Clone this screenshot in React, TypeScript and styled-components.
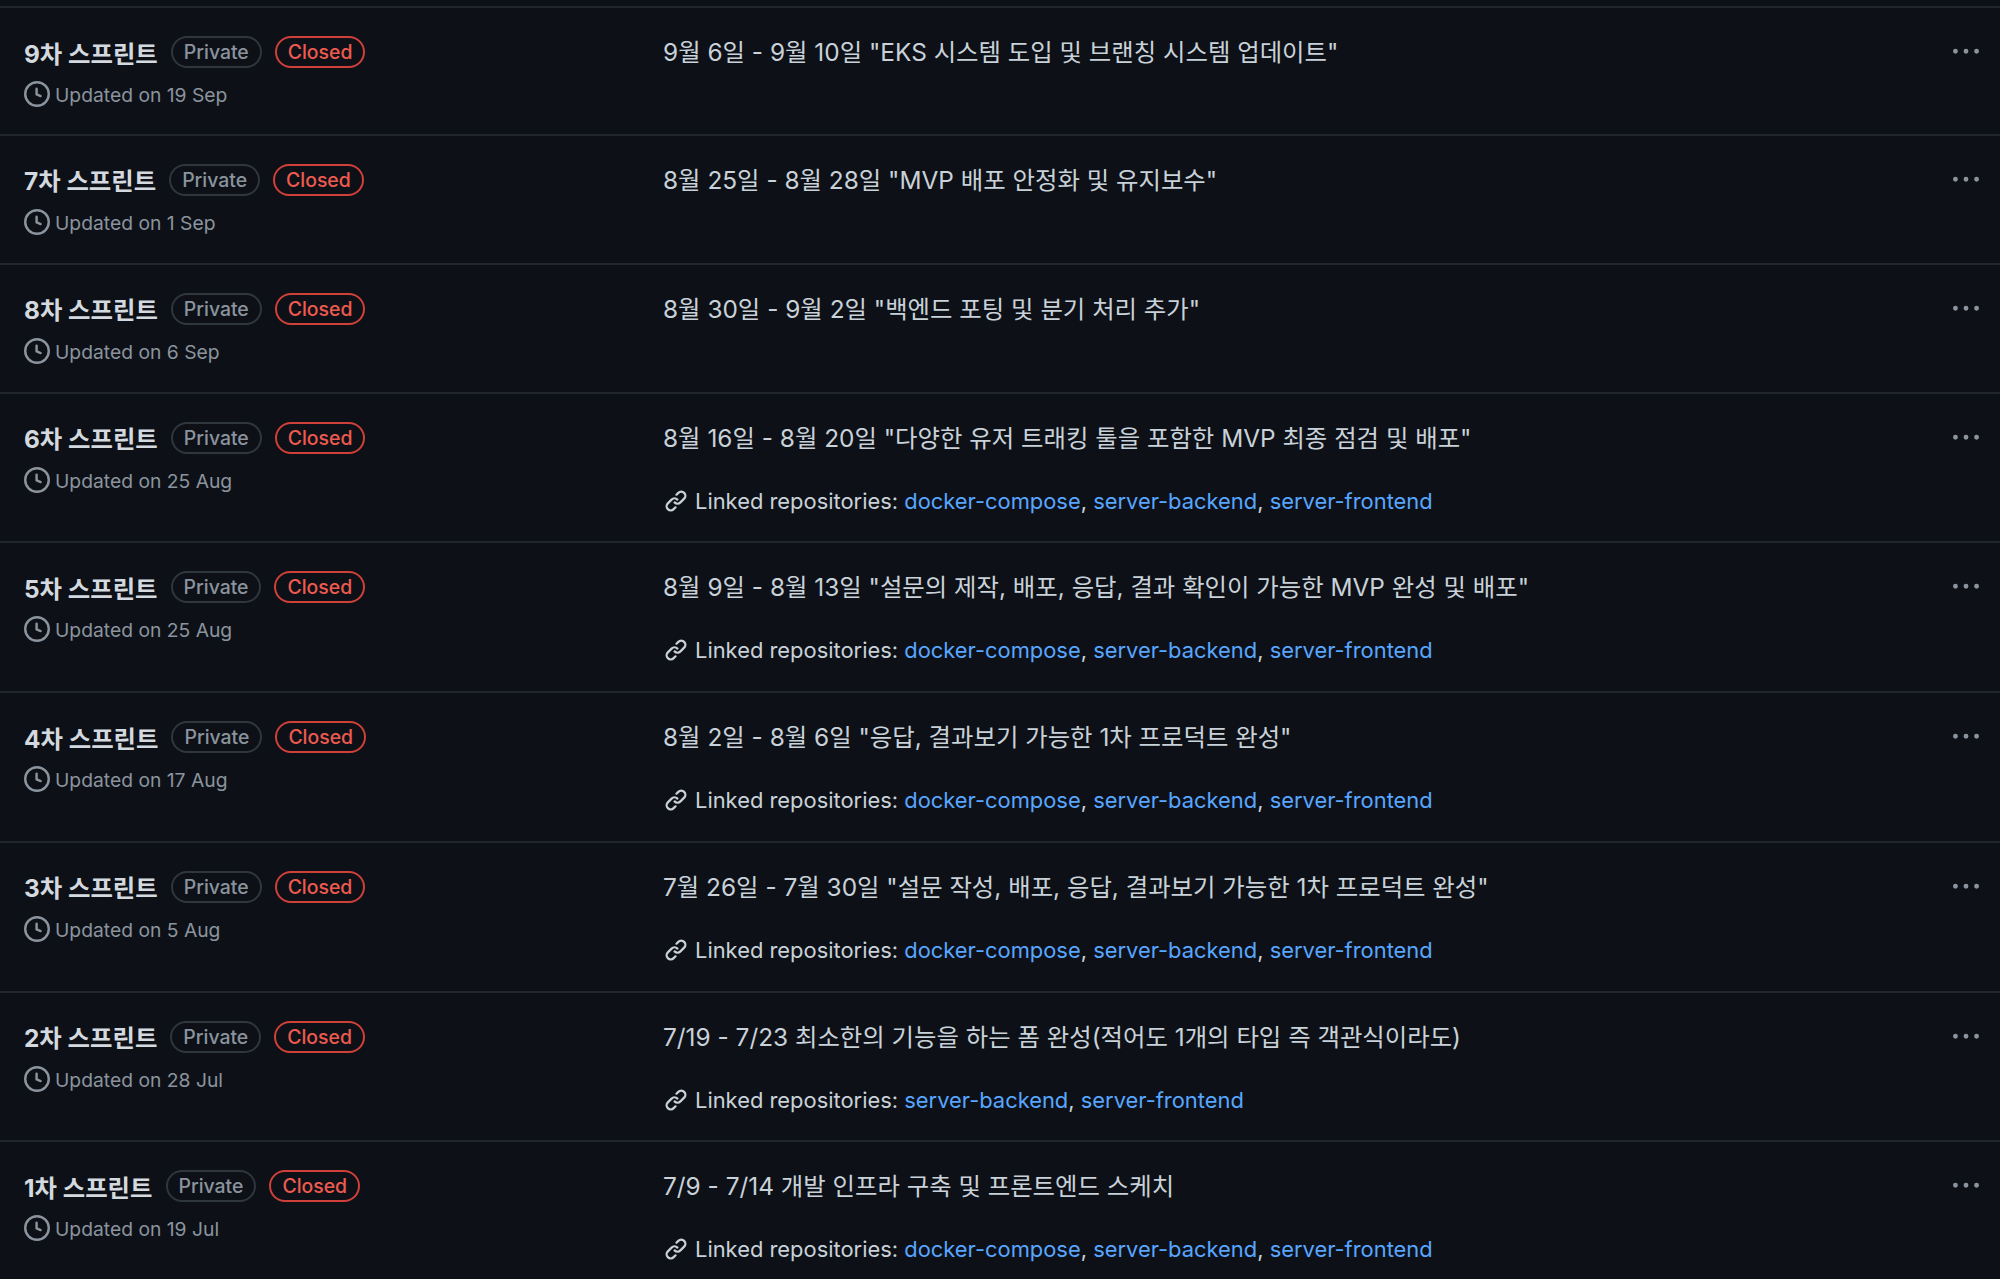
import React from 'react'
import styled, { createGlobalStyle } from 'styled-components'

const GlobalStyle = createGlobalStyle`
  html, body {
    margin: 0;
    padding: 0;
    height: 100%;
    background: #0d1117;
    overflow: hidden;
  }
  body {
    font-family: Inter, 'Noto Sans CJK KR', sans-serif;
    color: #c9d1d9;
  }
`

const Page = styled('div')`
  padding-top: 6px;
  height: 1279px;
  box-sizing: border-box;
  overflow: hidden;
`

const Row = styled('div')<{ $linked: boolean }>`
  display: grid;
  grid-template-columns: 639px 1fr 47px;
  height: ${({ $linked }) => ($linked ? 149.8 : 129)}px;
  box-sizing: border-box;
  padding-left: 24px;
  border-top: 2px solid #21262d;

  &:first-child {
    height: 127.5px;
  }
`

const Left = styled('div')`
  display: flex;
  flex-direction: column;
  padding-top: 28px;
`

const TitleRow = styled('div')`
  display: flex;
  align-items: center;
  height: 32px;
`

const Title = styled('span')`
  font-size: 24.4px;
  font-weight: 700;
  color: #d3d9df;
  margin-right: 13px;
`

const Pill = styled('span')<{ $closed?: boolean }>`
  display: inline-flex;
  align-items: center;
  height: 32px;
  box-sizing: border-box;
  padding: 0 11px;
  margin-right: 13px;
  border-radius: 16px;
  font-size: 19.4px;
  font-weight: 500;
  border: 2px solid ${({ $closed }) => ($closed ? '#cf4038' : '#30363d')};
  color: ${({ $closed }) => ($closed ? '#ee5a4f' : '#8b949e')};
`

const Updated = styled('div')`
  display: flex;
  align-items: center;
  gap: 5px;
  margin-top: 12px;
  height: 28px;
  font-size: 19.3px;
  color: #8b949e;
`

const UpdatedText = styled('span')`
  padding-top: 2px;
`

const Middle = styled('div')`
  display: flex;
  flex-direction: column;
  padding-top: 28px;
`

const Description = styled('div')`
  height: 32px;
  line-height: 32px;
  font-size: 24.4px;
  color: #c9d1d9;
  white-space: nowrap;
`

const Repos = styled('div')`
  display: flex;
  align-items: center;
  gap: 7px;
  margin-top: 31px;
  padding-left: 1px;
  height: 32px;
  font-size: 21.9px;
  color: #c9d1d9;
  white-space: nowrap;
`

const RepoLink = styled('span')`
  color: #58a6ff;
`

const More = styled('div')`
  display: flex;
  justify-content: flex-start;
  align-items: flex-start;
  padding-top: 31px;
  color: #8b949e;
`

const ClockIcon = () => (
  <svg width={26} height={26} viewBox="0 0 16 16" fill="currentColor">
    <path d="M8 0a8 8 0 1 1 0 16A8 8 0 0 1 8 0ZM1.5 8a6.5 6.5 0 1 0 13 0 6.5 6.5 0 0 0-13 0Zm7-3.25v2.992l2.028.812a.75.75 0 0 1-.557 1.392l-2.5-1A.751.751 0 0 1 7 8.25v-3.5a.75.75 0 0 1 1.5 0Z" />
  </svg>
)

const LinkIcon = () => (
  <svg width={24} height={24} viewBox="0 0 16 16" fill="currentColor">
    <path d="m7.775 3.275 1.25-1.25a3.5 3.5 0 1 1 4.95 4.95l-2.5 2.5a3.5 3.5 0 0 1-4.95 0 .751.751 0 0 1 .018-1.042.751.751 0 0 1 1.042-.018 1.998 1.998 0 0 0 2.83 0l2.5-2.5a2.002 2.002 0 0 0-2.83-2.83l-1.25 1.25a.751.751 0 0 1-1.042-.018.751.751 0 0 1-.018-1.042Zm-4.69 9.64a1.998 1.998 0 0 0 2.83 0l1.25-1.25a.751.751 0 0 1 1.042.018.751.751 0 0 1 .018 1.042l-1.25 1.25a3.5 3.5 0 1 1-4.95-4.95l2.5-2.5a3.5 3.5 0 0 1 4.95 0 .751.751 0 0 1-.018 1.042.751.751 0 0 1-1.042.018 1.998 1.998 0 0 0-2.83 0l-2.5 2.5a1.998 1.998 0 0 0 0 2.83Z" />
  </svg>
)

const DotsIcon = () => (
  <svg width={26} height={26} viewBox="0 0 16 16" fill="currentColor">
    <path d="M8 9a1.5 1.5 0 1 0 0-3 1.5 1.5 0 0 0 0 3ZM1.5 9a1.5 1.5 0 1 0 0-3 1.5 1.5 0 0 0 0 3Zm13 0a1.5 1.5 0 1 0 0-3 1.5 1.5 0 0 0 0 3Z" />
  </svg>
)

interface Sprint {
  title: string
  updated: string
  description: string
  repos: string[]
}

const allRepos = ['docker-compose', 'server-backend', 'server-frontend']

const sprints: Sprint[] = [
  { title: '9차 스프린트', updated: '19 Sep', description: '9월 6일 - 9월 10일 "EKS 시스템 도입 및 브랜칭 시스템 업데이트"', repos: [] },
  { title: '7차 스프린트', updated: '1 Sep', description: '8월 25일 - 8월 28일 "MVP 배포 안정화 및 유지보수"', repos: [] },
  { title: '8차 스프린트', updated: '6 Sep', description: '8월 30일 - 9월 2일 "백엔드 포팅 및 분기 처리 추가"', repos: [] },
  { title: '6차 스프린트', updated: '25 Aug', description: '8월 16일 - 8월 20일 "다양한 유저 트래킹 툴을 포함한 MVP 최종 점검 및 배포"', repos: allRepos },
  { title: '5차 스프린트', updated: '25 Aug', description: '8월 9일 - 8월 13일 "설문의 제작, 배포, 응답, 결과 확인이 가능한 MVP 완성 및 배포"', repos: allRepos },
  { title: '4차 스프린트', updated: '17 Aug', description: '8월 2일 - 8월 6일 "응답, 결과보기 가능한 1차 프로덕트 완성"', repos: allRepos },
  { title: '3차 스프린트', updated: '5 Aug', description: '7월 26일 - 7월 30일 "설문 작성, 배포, 응답, 결과보기 가능한 1차 프로덕트 완성"', repos: allRepos },
  { title: '2차 스프린트', updated: '28 Jul', description: '7/19 - 7/23 최소한의 기능을 하는 폼 완성(적어도 1개의 타입 즉 객관식이라도)', repos: ['server-backend', 'server-frontend'] },
  { title: '1차 스프린트', updated: '19 Jul', description: '7/9 - 7/14 개발 인프라 구축 및 프론트엔드 스케치', repos: allRepos },
]

export default function App() {
  return (
    <Page>
      <GlobalStyle />
      {sprints.map(sprint => (
        <Row key={sprint.title} $linked={sprint.repos.length > 0}>
          <Left>
            <TitleRow>
              <Title>{sprint.title}</Title>
              <Pill>Private</Pill>
              <Pill $closed>Closed</Pill>
            </TitleRow>
            <Updated>
              <ClockIcon />
              <UpdatedText>Updated on {sprint.updated}</UpdatedText>
            </Updated>
          </Left>
          <Middle>
            <Description>{sprint.description}</Description>
            {sprint.repos.length > 0 && (
              <Repos>
                <LinkIcon />
                <span>
                  Linked repositories:{' '}
                  {sprint.repos.map((repo, i) => (
                    <React.Fragment key={repo}>
                      {i > 0 && ', '}
                      <RepoLink>{repo}</RepoLink>
                    </React.Fragment>
                  ))}
                </span>
              </Repos>
            )}
          </Middle>
          <More>
            <DotsIcon />
          </More>
        </Row>
      ))}
    </Page>
  )
}
